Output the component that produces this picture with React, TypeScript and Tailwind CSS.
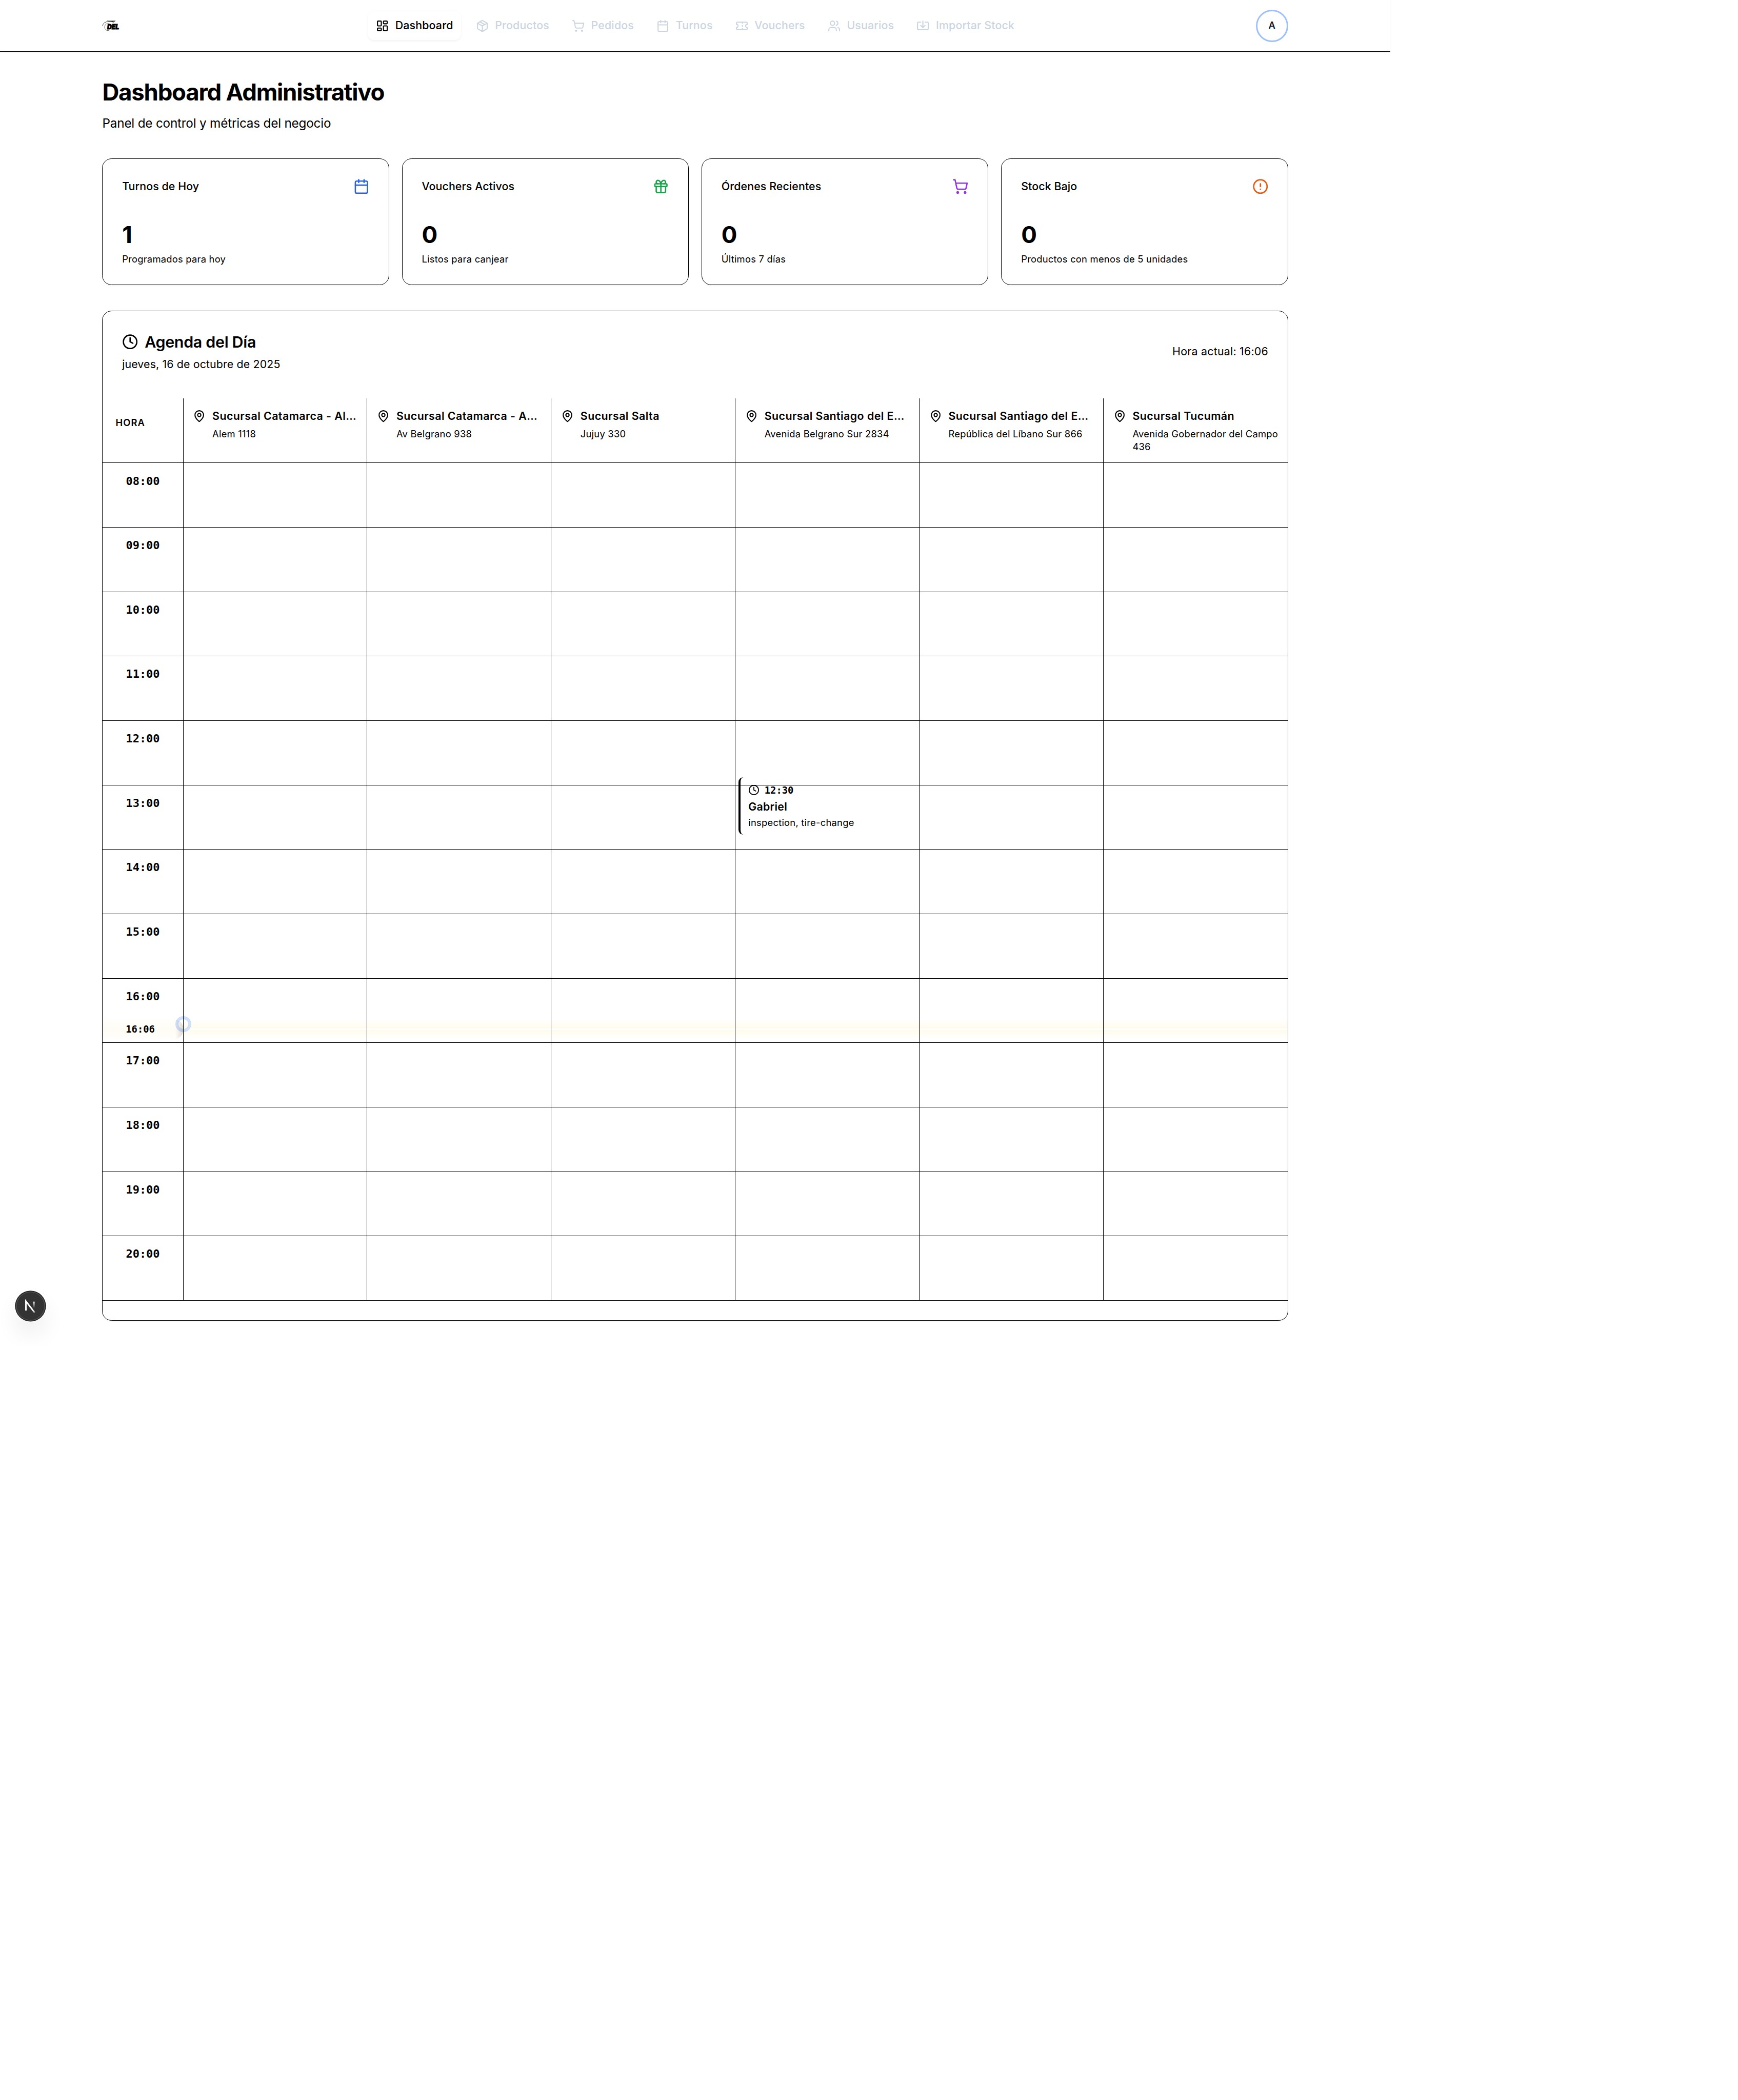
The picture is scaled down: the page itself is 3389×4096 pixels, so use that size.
import React from "react";
import {
  Calendar,
  CircleAlert,
  Clock,
  Gift,
  Import,
  LayoutDashboard,
  MapPin,
  Package,
  ShoppingCart,
  Ticket,
  Users,
  type LucideIcon,
} from "lucide-react";

const navItems: { label: string; icon: LucideIcon; active?: boolean }[] = [
  { label: "Dashboard", icon: LayoutDashboard, active: true },
  { label: "Productos", icon: Package },
  { label: "Pedidos", icon: ShoppingCart },
  { label: "Turnos", icon: Calendar },
  { label: "Vouchers", icon: Ticket },
  { label: "Usuarios", icon: Users },
  { label: "Importar Stock", icon: Import },
];

const stats: { title: string; value: string; note: string; icon: LucideIcon; color: string }[] = [
  { title: "Turnos de Hoy", value: "1", note: "Programados para hoy", icon: Calendar, color: "text-[#2563eb]" },
  { title: "Vouchers Activos", value: "0", note: "Listos para canjear", icon: Gift, color: "text-[#16a34a]" },
  { title: "Órdenes Recientes", value: "0", note: "Últimos 7 días", icon: ShoppingCart, color: "text-[#9333ea]" },
  { title: "Stock Bajo", value: "0", note: "Productos con menos de 5 unidades", icon: CircleAlert, color: "text-[#ea580c]" },
];

const branches: { name: string; address: string[] }[] = [
  { name: "Sucursal Catamarca - Al…", address: ["Alem 1118"] },
  { name: "Sucursal Catamarca - A…", address: ["Av Belgrano 938"] },
  { name: "Sucursal Salta", address: ["Jujuy 330"] },
  { name: "Sucursal Santiago del E…", address: ["Avenida Belgrano Sur 2834"] },
  { name: "Sucursal Santiago del E…", address: ["República del Líbano Sur 866"] },
  { name: "Sucursal Tucumán", address: ["Avenida Gobernador del Campo", "436"] },
];

const hours = [
  "08:00", "09:00", "10:00", "11:00", "12:00", "13:00", "14:00",
  "15:00", "16:00", "17:00", "18:00", "19:00", "20:00",
];

const gridCols = "grid grid-cols-[100px_repeat(6,minmax(0,1fr))]";
const mono = "font-['DejaVu_Sans_Mono',monospace]";
const small = "text-[13.6px]/5";
const tiny = "text-[11.7px]/4 tracking-[0.15px]";

function Logo() {
  return (
    <svg viewBox="0 0 105 66" className="h-[13.75px] w-[22px] overflow-visible" aria-label="DEL">
      <path d="M3 36C4 18 22 7 52 8" fill="none" stroke="#000" strokeWidth="2.4" />
      <path d="M30 5h50l-3 2H62l14 2-18 1c4 2 10 3 12 7-6-6-16-9-30-9z" fill="#000" stroke="#000" strokeWidth="1" />
      <ellipse cx="34" cy="42" rx="19" ry="21" fill="none" stroke="#000" strokeWidth="1.8" />
      <text
        x="30"
        y="55"
        textLength="71"
        lengthAdjust="spacingAndGlyphs"
        className="font-['Inter',sans-serif] text-[42px] font-black italic"
        stroke="#000"
        strokeWidth="3"
      >
        DEL
      </text>
    </svg>
  );
}

function Header() {
  return (
    <header className="border-b border-black bg-white shadow-[0_1px_2px_rgba(0,0,0,0.04)]">
      <div className="mx-auto flex h-[63.8px] w-[1536px] items-center px-8">
        <div className="flex flex-1 items-center">
          <Logo />
        </div>
        <nav className="flex items-center gap-2">
          {navItems.map(({ label, icon: Icon, active }) => (
            <div
              key={label}
              className={
                active
                  ? "flex h-9 items-center gap-2 rounded-lg px-2.5 text-[13.6px]/5 font-medium tracking-[0.1px] text-black shadow-[0_1px_3px_rgba(0,0,0,0.06)]"
                  : "flex h-9 items-center gap-2 rounded-lg px-2.5 text-[13.6px]/5 font-medium tracking-[0.1px] text-[#cbd5e1]"
              }
            >
              <Icon className="size-4" />
              <span>{label}</span>
            </div>
          ))}
        </nav>
        <div className="flex flex-1 items-center justify-end">
          <div className="flex size-10 items-center justify-center rounded-full border-2 border-[#9dbffc] text-[11.7px] font-semibold text-[#0f172a]">
            A
          </div>
        </div>
      </div>
    </header>
  );
}

function StatCards() {
  return (
    <section className="mt-[31.5px] grid grid-cols-4 gap-4">
      {stats.map(({ title, value, note, icon: Icon, color }) => (
        <article key={title} className="rounded-xl border border-black bg-white p-6 shadow-[0_1px_2px_rgba(0,0,0,0.04)]">
          <div className="flex h-5 items-center justify-between">
            <h3 className={`font-medium tracking-[0.06px] ${small}`}>{title}</h3>
            <Icon className={`size-5 ${color}`} />
          </div>
          <p className="mt-[32.4px] text-[29px]/9 font-bold">{value}</p>
          <p className={`mt-[4.4px] -mb-[0.8px] ${tiny}`}>{note}</p>
        </article>
      ))}
    </section>
  );
}

function Appointment() {
  return (
    <div className="absolute top-[70px] left-[3.5px] h-[71.5px] w-[220px] rounded-md border-l-[3px] border-black py-2 pl-2.5">
      <div className={`flex h-4 items-center gap-1.5 text-xs font-bold ${mono}`}>
        <Clock className="size-3.5" />
        12:30
      </div>
      <p className="mt-1 text-[13.6px]/[17.5px] font-semibold tracking-[0.15px]">Gabriel</p>
      <p className={`mt-[3.2px] ${tiny}`}>inspection, tire-change</p>
    </div>
  );
}

/* Marker for the current time, laid over the 16:00 row. */
function NowMarker() {
  return (
    <div className="pointer-events-none absolute top-[50.5px] left-0 flex h-[25px] w-full">
      <div className="relative flex w-[100px] items-center overflow-hidden rounded-r-full bg-[linear-gradient(to_bottom,#fffefb,#fffcf5_50%,#fffefb)]">
        <div className="absolute inset-y-0 right-0 w-2.5 bg-[linear-gradient(to_right,rgba(0,0,0,0),rgba(60,50,20,0.18))]" />
        <span className={`ml-[28.5px] text-xs font-bold ${mono}`}>16:06</span>
      </div>
      <div className="flex flex-1 flex-col justify-center bg-[linear-gradient(to_bottom,rgba(255,247,214,0),rgba(255,247,214,0.5)_50%,rgba(255,247,214,0))]">
        <div className="h-0.5 bg-white" />
      </div>
      <div className="absolute top-[-4px] left-[90px] size-5 rounded-full border-4 border-[#3b82f6]/25" />
    </div>
  );
}

function Agenda() {
  return (
    <section className="mt-8 rounded-xl border border-black bg-white pb-6 shadow-[0_1px_2px_rgba(0,0,0,0.04)]">
      <div className="flex items-center justify-between px-6 pt-6">
        <div>
          <h2 className="flex h-7 items-center gap-2 font-semibold">
            <Clock className="size-5" />
            <span className="pt-[0.4px] text-[19.4px]/7 tracking-[-0.22px]">Agenda del Día</span>
          </h2>
          <p className={`mt-1 tracking-[0.08px] ${small}`}>jueves, 16 de octubre de 2025</p>
        </div>
        <p className={`tracking-[0.15px] ${small}`}>Hora actual: 16:06</p>
      </div>

      <div className={`mt-8 border-b border-black ${gridCols}`}>
        <div className="h-20 border-r border-black px-4 pt-[22.5px] text-[11.7px]/4 font-semibold tracking-[0.65px]">HORA</div>
        {branches.map((branch, i) => (
          <div key={i} className="h-20 border-r border-black p-3 last:border-r-0">
            <div className="flex items-center gap-2">
              <MapPin className="size-4 shrink-0" />
              <h3 className={`font-semibold tracking-[0.28px] whitespace-nowrap ${small}`}>{branch.name}</h3>
            </div>
            <div className={`mt-[4.5px] ml-6 whitespace-nowrap ${tiny}`}>
              {branch.address.map((line) => (
                <p key={line}>{line}</p>
              ))}
            </div>
          </div>
        ))}
      </div>

      {hours.map((hour) => (
        <div key={hour} className={`relative h-20 border-b border-black ${gridCols}`}>
          {hour === "16:00" && <NowMarker />}
          <div className={`relative border-r border-black pt-[12.2px] text-center text-sm font-bold ${mono}`}>{hour}</div>
          {branches.map((_, i) => (
            <div key={i} className="relative border-r border-black last:border-r-0">
              {hour === "12:00" && i === 3 && <Appointment />}
            </div>
          ))}
        </div>
      ))}
    </section>
  );
}

function DevBadge() {
  return (
    <div className="absolute top-[1603.7px] left-5 flex size-9 items-center justify-center rounded-full bg-[#333] shadow-[0_0_0_1px_#171717,inset_0_0_0_1px_rgba(255,255,255,0.16),0_16px_32px_-8px_rgba(0,0,0,0.24)]">
      <svg viewBox="-12 -13 40 40" className="size-10 shrink-0" fill="none" strokeWidth="1.86">
        <defs>
          <linearGradient id="diag" x1="9.95" y1="10.9" x2="14" y2="16" gradientUnits="userSpaceOnUse">
            <stop stopColor="white" />
            <stop offset="0.6" stopColor="white" stopOpacity="0.77" />
            <stop offset="1" stopColor="white" stopOpacity="0" />
          </linearGradient>
          <linearGradient id="stem" x1="11.8" y1="1" x2="11.8" y2="9.6" gradientUnits="userSpaceOnUse">
            <stop stopColor="white" />
            <stop offset="1" stopColor="white" stopOpacity="0" />
          </linearGradient>
        </defs>
        <path d="M13.3 15.2L2.34 1V12.6" stroke="url(#diag)" />
        <path d="M12.3 1.5V9.6" stroke="url(#stem)" />
      </svg>
    </div>
  );
}

export default function App() {
  return (
    <div className="relative w-[1726px] bg-white font-['Inter',sans-serif] text-black antialiased [zoom:1.5708]">
      <Header />
      <main className="mx-auto w-[1536px] px-8 pt-[32.2px] pb-8">
        <h1 className="text-[29px]/9 font-bold tracking-[-0.8px]">Dashboard Administrativo</h1>
        <p className="mt-[8.5px] text-[15.5px]/6 tracking-[-0.14px]">Panel de control y métricas del negocio</p>
        <StatCards />
        <Agenda />
      </main>
      <DevBadge />
    </div>
  );
}
